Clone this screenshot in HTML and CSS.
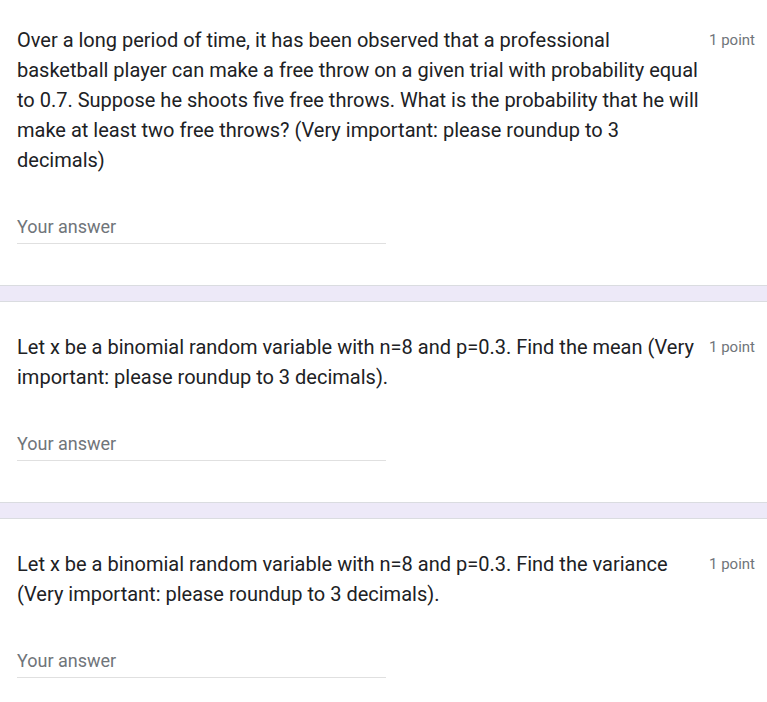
FILE: index.html
```html
<!DOCTYPE html>
<html>
<head>
<meta charset="utf-8">
<link rel="stylesheet" href="styles.css">
</head>
<body>
<div class="form">
  <div class="card card-first">
    <div class="q-head">
      <div class="q-title">Over a long period of time, it has been observed that a professional basketball player can make a free throw on a given trial with probability equal to 0.7. Suppose he shoots five free throws. What is the probability that he will make at least two free throws? (Very important: please roundup to 3 decimals)</div>
      <div class="q-points">1 point</div>
    </div>
    <div class="answer">Your answer</div>
  </div>
  <div class="gap"></div>
  <div class="card">
    <div class="q-head">
      <div class="q-title">Let x be a binomial random variable with n=8 and p=0.3. Find the mean (Very important: please roundup to 3 decimals).</div>
      <div class="q-points">1 point</div>
    </div>
    <div class="answer">Your answer</div>
  </div>
  <div class="gap"></div>
  <div class="card">
    <div class="q-head">
      <div class="q-title">Let x be a binomial random variable with n=8 and p=0.3. Find the variance (Very important: please roundup to 3 decimals).</div>
      <div class="q-points">1 point</div>
    </div>
    <div class="answer">Your answer</div>
  </div>
</div>
</body>
</html>
```
FILE: styles.css
```css
html, body {
  margin: 0;
  padding: 0;
  background: #ffffff;
}
body {
  font-family: Roboto, "Liberation Sans", Arial, sans-serif;
  color: #202124;
}
.form {
  display: flex;
  flex-direction: column;
}
.card {
  background: #ffffff;
  padding: 30px 12px 41px 17px;
}
.card-first {
  padding-top: 25px;
}
.gap {
  height: 15px;
  background: #ede9f8;
  border-top: 1px solid #dadce0;
  border-bottom: 1px solid #dadce0;
}
.q-head {
  display: flex;
  align-items: flex-start;
  gap: 8px;
}
.q-title {
  flex: 1;
  font-size: 20px;
  line-height: 30px;
  color: #202124;
}
.q-points {
  flex: none;
  font-size: 15px;
  line-height: 30px;
  color: #70757a;
  white-space: nowrap;
}
.answer {
  margin-top: 40px;
  width: 369px;
  font-size: 18px;
  line-height: 24px;
  color: #70757a;
  padding-bottom: 4px;
  border-bottom: 1px solid #e0e0e0;
}
```
